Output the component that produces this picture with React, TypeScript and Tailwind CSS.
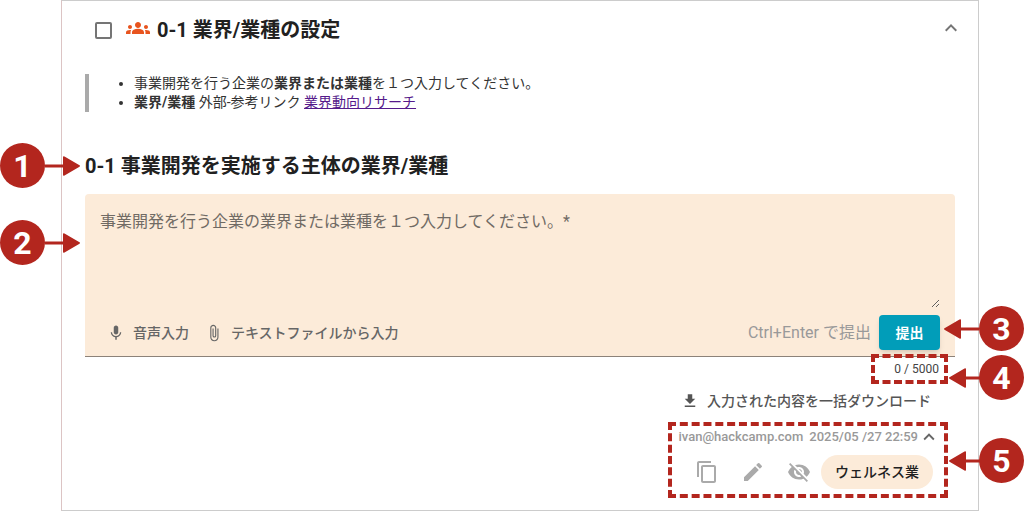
import { useState } from 'react';
import {
  MdAttachFile,
  MdContentCopy,
  MdEdit,
  MdExpandLess,
  MdFileDownload,
  MdGroups,
  MdMic,
  MdVisibilityOff,
} from 'react-icons/md';
import clsx from 'clsx';

interface CalloutProps {
  number: number;
  side: 'left' | 'right';
  short?: boolean;
  className?: string;
}

// Numbered marker with an arrow pointing at the element it annotates
function Callout({ number, side, short, className }: CalloutProps) {
  return (
    <div
      className={clsx(
        'absolute z-10 flex items-center text-[#b3261e]',
        side === 'right' && 'flex-row-reverse',
        className
      )}
    >
      <span className="flex size-[45px] shrink-0 items-center justify-center rounded-full bg-[#b3261e] text-[32px] leading-none font-bold text-white">
        {number}
      </span>
      <svg
        viewBox="0 0 35 20"
        className={clsx('h-5 w-[35px] shrink-0', side === 'right' && 'rotate-180', short && '-mr-[5px]')}
        fill="currentColor"
        aria-hidden="true"
      >
        <path d="M0 8.4h18V1.200Q18-.3 19.500 .5L34.500 9.300Q35.500 10 34.500 10.700L19.500 19.500Q18 20.300 18 18.800V11.600H0z" />
      </svg>
    </div>
  );
}

const MAX_LENGTH = 5000;

export default function App() {
  const [done, setDone] = useState(false);
  const [value, setValue] = useState('');

  return (
    <div className="bg-white pr-[45px] pl-[61px] font-[Roboto,'Noto_Sans_CJK_JP',sans-serif] text-[#212121]">
      <main className="border border-[#cccccc] border-l-[#dcc4c4]">
        {/* Header */}
        <header className="flex items-start pt-[15px] pr-[15px] pl-[33px]">
          <input
            type="checkbox"
            id="done"
            checked={done}
            onChange={(e) => setDone(e.target.checked)}
            className="size-[17px] appearance-none self-center rounded-[2px] border-2 border-[#757575] checked:bg-[#757575]"
          />
          <MdGroups className="ml-[14px] size-6 text-[#e8541e]" />
          <label htmlFor="done" className="ml-[7px] text-xl leading-7 font-bold">
            0-1 業界/業種の設定
          </label>
          <button type="button" aria-label="折りたたむ" className="ml-auto text-[#757575]">
            <MdExpandLess className="size-6" />
          </button>
        </header>

        <div className="px-[23px] pb-3">
          {/* Instructions */}
          <ul className="mt-[30px] list-disc border-l-4 border-[#aaaaaa] pl-[45px] text-sm leading-[19px] text-[#333333]">
            <li>
              事業開発を行う企業の<strong>業界または業種</strong>を１つ入力してください。
            </li>
            <li>
              <strong>業界/業種</strong> 外部-参考リンク{' '}
              <a href="#research" className="text-[#551a8b] underline">
                業界動向リサーチ
              </a>
            </li>
          </ul>

          <h2 className="relative mt-10 text-xl leading-7 font-bold">
            <label htmlFor="industry">0-1 事業開発を実施する主体の業界/業種</label>
            <Callout number={1} side="left" className="-top-[9px] left-[-85px]" />
          </h2>

          {/* Answer field */}
          <div className="relative mt-[14px] rounded-t border-b border-[#8c8279] bg-[#fcebd9]">
            <Callout number={2} side="left" className="top-[26px] left-[-85px]" />
            <div className="pr-[15px]">
              <textarea
                id="industry"
                value={value}
                maxLength={MAX_LENGTH}
                onChange={(e) => setValue(e.target.value)}
                placeholder="事業開発を行う企業の業界または業種を１つ入力してください。*"
                className="block h-[114px] w-full resize-y bg-transparent pt-4 pl-[15px] text-base leading-6 outline-none placeholder:text-[#706a64]"
              />
            </div>
            <div className="flex items-center pt-[7px] pr-[15px] pb-[6px] pl-[22px] text-sm text-[#666666]">
              <button type="button" className="flex items-center gap-2 font-medium">
                <MdMic className="size-[18px]" />
                音声入力
              </button>
              <button type="button" className="ml-4 flex items-center gap-2 font-medium">
                <MdAttachFile className="size-[18px]" />
                テキストファイルから入力
              </button>
              <span className="ml-auto text-base text-[#999999]">Ctrl+Enter で提出</span>
              <div className="relative ml-2">
                <button
                  type="button"
                  className="block h-[35px] w-[61px] rounded bg-[#019db9] font-bold text-white shadow-md"
                >
                  提出
                </button>
                <Callout number={3} side="right" className="-top-[9px] left-full ml-1" />
              </div>
            </div>
          </div>

          <div className="relative -mt-[3px] mr-[7px] ml-auto w-[77px] border-4 border-dashed border-[#b3261e] pr-[5px] text-right text-xs leading-[22px] text-[#444444]">
            {value.length} / {MAX_LENGTH}
            <Callout number={4} side="right" short className="-top-[3px] left-full ml-[5px]" />
          </div>

          <button
            type="button"
            className="mt-[7px] mr-6 ml-auto flex items-center gap-2 text-sm leading-5 font-medium text-[#555555]"
          >
            <MdFileDownload className="size-[18px]" />
            入力された内容を一括ダウンロード
          </button>

          {/* Submitted answer */}
          <section className="relative mt-[11px] mr-[7px] ml-auto w-[280px] border-4 border-dashed border-[#b3261e] pt-px pb-[5px]">
            <div className="flex h-5 items-center justify-end pr-1 text-[13px] font-medium text-[#999999]">
              <span>ivan@hackcamp.com</span>
              <time className="ml-[6px]">2025/05 /27 22:59</time>
              <button type="button" aria-label="閉じる" className="text-[#666666]">
                <MdExpandLess className="size-[22px]" />
              </button>
            </div>
            <div className="mt-2 flex items-center justify-end pr-[11px] text-[#aaaaaa]">
              <div className="flex gap-[22px]">
                <button type="button" aria-label="コピー">
                  <MdContentCopy className="size-6" />
                </button>
                <button type="button" aria-label="編集">
                  <MdEdit className="size-6" />
                </button>
                <button type="button" aria-label="非表示">
                  <MdVisibilityOff className="size-6" />
                </button>
              </div>
              <p className="ml-[10px] rounded-full bg-[#fcebd9] px-[14px] text-sm leading-[34px] font-medium text-[#212121]">
                ウェルネス業
              </p>
            </div>
            <Callout number={5} side="right" short className="top-[12px] left-full ml-[5px]" />
          </section>
        </div>
      </main>
    </div>
  );
}
